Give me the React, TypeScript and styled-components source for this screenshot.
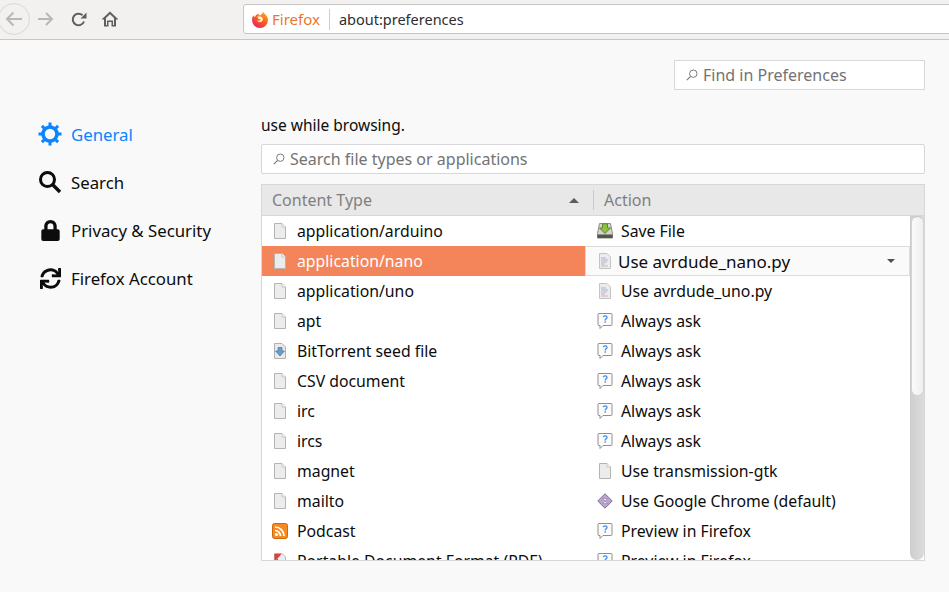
import React from "react";
import styled, { createGlobalStyle } from "styled-components";
import { FaLock, FaSync } from "react-icons/fa";

type IconName = "file" | "text" | "ask" | "save" | "torrent" | "rss" | "pdf" | "chrome";

interface Row {
  type: string;
  typeIcon: IconName;
  action: string;
  actionIcon: IconName;
  selected?: boolean;
}

const rows: Row[] = [
  { type: "application/arduino", typeIcon: "file", action: "Save File", actionIcon: "save" },
  { type: "application/nano", typeIcon: "file", action: "Use avrdude_nano.py", actionIcon: "text", selected: true },
  { type: "application/uno", typeIcon: "file", action: "Use avrdude_uno.py", actionIcon: "text" },
  { type: "apt", typeIcon: "file", action: "Always ask", actionIcon: "ask" },
  { type: "BitTorrent seed file", typeIcon: "torrent", action: "Always ask", actionIcon: "ask" },
  { type: "CSV document", typeIcon: "file", action: "Always ask", actionIcon: "ask" },
  { type: "irc", typeIcon: "file", action: "Always ask", actionIcon: "ask" },
  { type: "ircs", typeIcon: "file", action: "Always ask", actionIcon: "ask" },
  { type: "magnet", typeIcon: "file", action: "Use transmission-gtk", actionIcon: "file" },
  { type: "mailto", typeIcon: "file", action: "Use Google Chrome (default)", actionIcon: "chrome" },
  { type: "Podcast", typeIcon: "rss", action: "Preview in Firefox", actionIcon: "ask" },
  { type: "Portable Document Format (PDF)", typeIcon: "pdf", action: "Preview in Firefox", actionIcon: "ask" },
];

const RowIcon = ({ name }: { name: IconName }) => {
  const sheet = "M3 .5h7L13.5 4v11.5H2.5V.5z";
  switch (name) {
    case "file":
      return (
        <svg width="16" height="16" viewBox="0 0 16 16">
          <path d={sheet} fill="#ececec" stroke="#b4b4b4" />
          <path d="M10 .5V4h3.5" fill="#fafafa" stroke="#c4c4c4" />
        </svg>
      );
    case "text":
      return (
        <svg width="16" height="16" viewBox="0 0 16 16">
          <path d={sheet} fill="#ececec" stroke="#c4c4c4" />
          <path d="M4 5h5M4 7h7" stroke="#9db8d2" />
          <path d="M4 9h6" stroke="#d2a8bc" />
          <path d="M4 11h4" stroke="#a8c8a8" />
          <path d="M4 13h7" stroke="#c6b4c6" />
        </svg>
      );
    case "ask":
      return (
        <svg width="16" height="16" viewBox="0 0 16 16">
          <path d="M2 .5h12a1 1 0 0 1 1 1v10a1 1 0 0 1-1 1H6l-3 3v-3H2a1 1 0 0 1-1-1v-10a1 1 0 0 1 1-1z" fill="#fbfbfb" stroke="#8f8f8f" />
          <path d="M6.300 4.200C6.600 2.400 10 2.400 10 4.400c0 1.400-1.800 1.400-1.800 3M8.200 8.300v1.500" fill="none" stroke="#3f8bdc" strokeWidth="1.300" />
        </svg>
      );
    case "save":
      return (
        <svg width="16" height="16" viewBox="0 0 16 16">
          <path d="M2.500 .5h11l2 10v4.500H.5v-4.500z" fill="#d4d4d0" stroke="#8d8d88" />
          <path d="M.5 11.500h15v3.500H.5z" fill="#55554f" />
          <path d="M5.500 .8h5V5h3L8 10.500 2.500 5h3z" fill="#8fc043" stroke="#5d8a22" />
        </svg>
      );
    case "torrent":
      return (
        <svg width="16" height="16" viewBox="0 0 16 16">
          <path d={sheet} fill="#e9e9e9" stroke="#b0b0b0" />
          <path d="M6 4.500h4V8h2.500L8 13 3.500 8H6z" fill="#6d9cc8" stroke="#4876a3" strokeWidth=".7" />
        </svg>
      );
    case "rss":
      return (
        <svg width="16" height="16" viewBox="0 0 16 16">
          <rect x=".5" y=".5" width="15" height="15" rx="2" fill="#f58a1f" stroke="#c96a0f" />
          <circle cx="4.500" cy="11.500" r="1.600" fill="#fff" />
          <path d="M3 7.500a5.500 5.500 0 0 1 5.500 5.500M3 4a9 9 0 0 1 9 9" fill="none" stroke="#fff" strokeWidth="1.700" />
        </svg>
      );
    case "pdf":
      return (
        <svg width="16" height="16" viewBox="0 0 16 16">
          <path d={sheet} fill="#eeeeee" stroke="#b4b4b4" />
          <path d="M2.500 1H9.500L2.500 9z" fill="#d94040" />
          <path d="M4 5l6 6" stroke="#d94040" />
        </svg>
      );
    case "chrome":
      return (
        <svg width="16" height="16" viewBox="0 0 16 16">
          <path d="M8 .8L15.200 8 8 15.200.8 8z" fill="#b9a6cc" stroke="#80699b" />
          <path d="M5.500 5.500h5L5.500 10.500h5z" fill="#efe9f4" stroke="#8f7aa8" strokeWidth=".6" />
        </svg>
      );
  }
};

const FindGlyph = () => (
  <svg width="12" height="12" viewBox="0 0 12 12">
    <circle cx="7.300" cy="4.700" r="3.700" fill="none" stroke="#7a7a7a" />
    <path d="M4.600 7.400L.8 11.200" stroke="#7a7a7a" strokeWidth="1.200" />
  </svg>
);

const FirefoxLogo = () => (
  <svg width="16" height="17" viewBox="0 0 16 17">
    <defs>
      <linearGradient id="fx" x1="0.800" y1="0" x2="0.200" y2="1">
        <stop offset="0" stopColor="#ffb01f" />
        <stop offset=".5" stopColor="#ff5a22" />
        <stop offset="1" stopColor="#e0226a" />
      </linearGradient>
    </defs>
    <path d="M11 .5c.6 1.500 1.800 2.300 2.700 3.300C15.200 5.400 16 7.200 16 9a8 8 0 1 1-16 0c0-2 .6-3.600 1.600-4.800.3 1 .8 1.500 1.400 1.800C3.400 4.300 5 3 7 2.800c-.4.800-.3 1.400 0 1.800 1.500-.2 3.600-1.500 4-4.100z" fill="url(#fx)" />
    <path d="M5 5.800c2.200-1.300 5-.5 5.700 1.400.6 1.700-.5 3.600-2.500 3.900-1.700.2-3-.8-3.300-2 .8.700 2 1 3 .4.700-.4.600-1 .2-1.300-.8.200-1.700 0-2-.7-.2-.6-.4-1.100-1.100-1.700z" fill="#fff2c8" />
  </svg>
);

const App = () => (
  <Page>
    <GlobalStyle />
    <Toolbar>
      <BackButton>
        <svg width="18" height="16" viewBox="0 0 18 16">
          <path d="M17 8H2M8.500 1.500L2 8l6.500 6.500" fill="none" stroke="#b8b8b8" strokeWidth="2" />
        </svg>
      </BackButton>
      <NavIcon $gap={8}>
        <svg width="16" height="14" viewBox="0 0 16 14">
          <path d="M0 7h14M8 1l6 6-6 6" fill="none" stroke="#b8b8b8" strokeWidth="2" />
        </svg>
      </NavIcon>
      <NavIcon $gap={17}>
        <svg width="16" height="15" viewBox="0 0 16 15">
          <path d="M13 9.500A5.800 5.800 0 1 1 11.500 3.200" fill="none" stroke="#5e5e5e" strokeWidth="2" />
          <path d="M15.500 .5v6h-6z" fill="#5e5e5e" />
        </svg>
      </NavIcon>
      <NavIcon $gap={15}>
        <svg width="16" height="16" viewBox="0 0 16 16">
          <path fillRule="evenodd" d="M8 .5L16 8l-1 1-1-.9V15.500H9.500V11h-3v4.500H2V8.100L1 9 0 8zM4 7v7h1V9.500h6V14h1V7L8 3.200z" fill="#5e5e5e" />
        </svg>
      </NavIcon>
      <UrlBar>
        <FirefoxLogo />
        <Identity>Firefox</Identity>
        <UrlDivider />
        <UrlText>about:preferences</UrlText>
      </UrlBar>
    </Toolbar>
    <Body>
      <Sidebar>
        <NavItem $active>
          <NavGlyph>
            <svg width="24" height="24" viewBox="0 0 24 24">
              <circle cx="12" cy="12" r="7" fill="none" stroke="#0a84ff" strokeWidth="3.600" />
              <path d="M12 .5v4M12 19.500v4M.5 12h4M19.500 12h4M3.900 3.900l2.900 2.900M17.200 17.200l2.900 2.900M20.100 3.900l-2.900 2.900M6.800 17.200l-2.900 2.900" stroke="#0a84ff" strokeWidth="3" />
            </svg>
          </NavGlyph>
          General
        </NavItem>
        <NavItem>
          <NavGlyph>
            <svg width="24" height="24" viewBox="0 0 24 24">
              <circle cx="9.500" cy="9.500" r="7" fill="none" stroke="#0c0c0d" strokeWidth="3" />
              <path d="M14.500 14.500L22 22" stroke="#0c0c0d" strokeWidth="3.400" />
            </svg>
          </NavGlyph>
          Search
        </NavItem>
        <NavItem>
          <NavGlyph>
            <FaLock size={21} color="#0c0c0d" />
          </NavGlyph>
          Privacy &amp; Security
        </NavItem>
        <NavItem>
          <NavGlyph>
            <FaSync size={21} color="#0c0c0d" />
          </NavGlyph>
          Firefox Account
        </NavItem>
      </Sidebar>
      <Content>
        <FindRow>
          <SearchBox $width="251px" $square>
            <FindGlyph />
            Find in Preferences
          </SearchBox>
        </FindRow>
        <Note>use while browsing.</Note>
        <SearchBox>
          <FindGlyph />
          Search file types or applications
        </SearchBox>
        <Table>
          <TableHead>
            <TypeHead>
              Content Type
              <SortArrow />
            </TypeHead>
            <ActionHead>Action</ActionHead>
          </TableHead>
          <TableBody>
            <RowList>
              {rows.map(row => (
                <TableRow key={row.type}>
                  <TypeCell $selected={row.selected}>
                    <RowIcon name={row.typeIcon} />
                    <span>{row.type}</span>
                  </TypeCell>
                  {row.selected ? (
                    <ActionMenu>
                      <RowIcon name={row.actionIcon} />
                      <span>{row.action}</span>
                      <MenuArrow />
                    </ActionMenu>
                  ) : (
                    <ActionCell>
                      <RowIcon name={row.actionIcon} />
                      <span>{row.action}</span>
                    </ActionCell>
                  )}
                </TableRow>
              ))}
            </RowList>
            <ScrollTrack>
              <ScrollThumb />
            </ScrollTrack>
          </TableBody>
        </Table>
      </Content>
    </Body>
  </Page>
);

export default App;

const GlobalStyle = createGlobalStyle`
  html, body {
    margin: 0;
    padding: 0;
    background: #f9f9f9;
  }
  body {
    font-family: "Noto Sans", "Open Sans", sans-serif;
    color: #0c0c0d;
  }
`;

const Page = styled.div`
  width: 949px;
  height: 592px;
  overflow: hidden;
  display: flex;
  flex-direction: column;
`;

const Toolbar = styled.div`
  height: 38px;
  padding-bottom: 1px;
  flex: none;
  display: flex;
  align-items: center;
  background: #f2f1f0;
  border-bottom: 1px solid #c9c7c5;
`;

const BackButton = styled.div`
  width: 30px;
  height: 30px;
  margin-left: -2px;
  flex: none;
  display: flex;
  align-items: center;
  justify-content: center;
  border: 1px solid #d9d8d6;
  border-radius: 50%;
`;

const NavIcon = styled.div<{ $gap: number }>`
  flex: none;
  display: flex;
  margin-left: ${p => p.$gap}px;
`;

const UrlBar = styled.div`
  height: 28px;
  margin: 0 -20px 0 125px;
  flex: 1;
  display: flex;
  align-items: center;
  padding-left: 8px;
  background: #fff;
  border: 1px solid #c8c6c4;
  border-radius: 3px;
  font-size: 14.500px;
`;

const Identity = styled.span`
  margin-left: 4px;
  font-size: 15px;
  color: #e8772d;
`;

const UrlDivider = styled.span`
  width: 1px;
  height: 21px;
  margin: 0 9px;
  background: #cfcdcb;
`;

const UrlText = styled.span`
  color: #2e2e2e;
`;

const Body = styled.div`
  flex: 1;
  display: flex;
  background: #f9f9f9;
`;

const Sidebar = styled.div`
  width: 223px;
  flex: none;
  padding: 70px 0 0 38px;
`;

const NavItem = styled.div<{ $active?: boolean }>`
  height: 48px;
  display: flex;
  align-items: center;
  gap: 9px;
  font-size: 16.800px;
  color: ${p => (p.$active ? "#0a84ff" : "#0c0c0d")};
`;

const NavGlyph = styled.span`
  width: 24px;
  height: 24px;
  display: flex;
  align-items: center;
  justify-content: center;
`;

const Content = styled.div`
  width: 664px;
  flex: none;
  display: flex;
  flex-direction: column;
`;

const FindRow = styled.div`
  display: flex;
  justify-content: flex-end;
  padding-top: 20px;
`;

const SearchBox = styled.div<{ $width?: string; $square?: boolean }>`
  width: ${p => p.$width || "auto"};
  height: 30px;
  box-sizing: border-box;
  display: flex;
  align-items: center;
  gap: 5px;
  padding-left: 11px;
  background: #fff;
  border: 1px solid #d7d7db;
  border-radius: ${p => (p.$square ? "0" : "2px")};
  font-size: 16px;
  color: #737373;
`;

const Note = styled.div`
  height: 22px;
  margin-top: 24px;
  margin-bottom: 8px;
  line-height: 22px;
  font-size: 15.500px;
`;

const Table = styled.div`
  height: 375px;
  margin-top: 10px;
  display: flex;
  flex-direction: column;
  background: #fff;
  border: 1px solid #d7d7db;
  overflow: hidden;
`;

const TableHead = styled.div`
  height: 30px;
  flex: none;
  display: flex;
  background: #e8e8e8;
  border-bottom: 1px solid #d7d7db;
  font-size: 16px;
  color: #808080;
`;

const TypeHead = styled.div`
  width: 332px;
  flex: none;
  box-sizing: border-box;
  display: flex;
  align-items: center;
  justify-content: space-between;
  padding: 0 6px 0 10px;
  border-right: 1px solid #c9c9cc;
  margin: 5px 0;
`;

const SortArrow = styled.span`
  width: 0;
  height: 0;
  border-left: 5px solid transparent;
  border-right: 5px solid transparent;
  border-bottom: 5px solid #5c5c5c;
  margin-right: 8px;
`;

const ActionHead = styled.div`
  display: flex;
  align-items: center;
  padding-left: 10px;
`;

const TableBody = styled.div`
  flex: 1;
  min-height: 0;
  display: flex;
`;

const RowList = styled.div`
  flex: 1;
  min-width: 0;
`;

const TableRow = styled.div`
  height: 30px;
  display: grid;
  grid-template-columns: 323px 1fr;
  font-size: 15.800px;
`;

const TypeCell = styled.div<{ $selected?: boolean }>`
  display: flex;
  align-items: center;
  gap: 9px;
  padding-left: 10px;
  background: ${p => (p.$selected ? "#f4855a" : "transparent")};
  color: ${p => (p.$selected ? "#fff" : "#0c0c0d")};
`;

const ActionCell = styled.div`
  display: flex;
  align-items: center;
  gap: 8px;
  padding-left: 12px;
  font-size: 15.800px;
`;

const ActionMenu = styled(ActionCell)`
  gap: 5px;
  padding: 0 14px 0 11px;
  background: #fafafa;
  border: 1px solid #dcdcdc;
  box-sizing: border-box;
  font-size: 17px;
`;

const MenuArrow = styled.span`
  width: 0;
  height: 0;
  margin-left: auto;
  border-left: 4.500px solid transparent;
  border-right: 4.500px solid transparent;
  border-top: 4.500px solid #4f4f4f;
`;

const ScrollTrack = styled.div`
  width: 14px;
  height: 344px;
  flex: none;
  background: linear-gradient(to right, #cfcfcf, #dcdcdc);
  border-left: 1px solid #cccccc;
  box-sizing: border-box;
  border-radius: 0 0 7px 7px;
`;

const ScrollThumb = styled.div`
  height: 180px;
  background: linear-gradient(to right, #fbfafa, #f0eeee);
  border: 1px solid #d5d3d3;
  border-top-color: #c8c6c6;
  border-radius: 7px;
  box-sizing: border-box;
`;
